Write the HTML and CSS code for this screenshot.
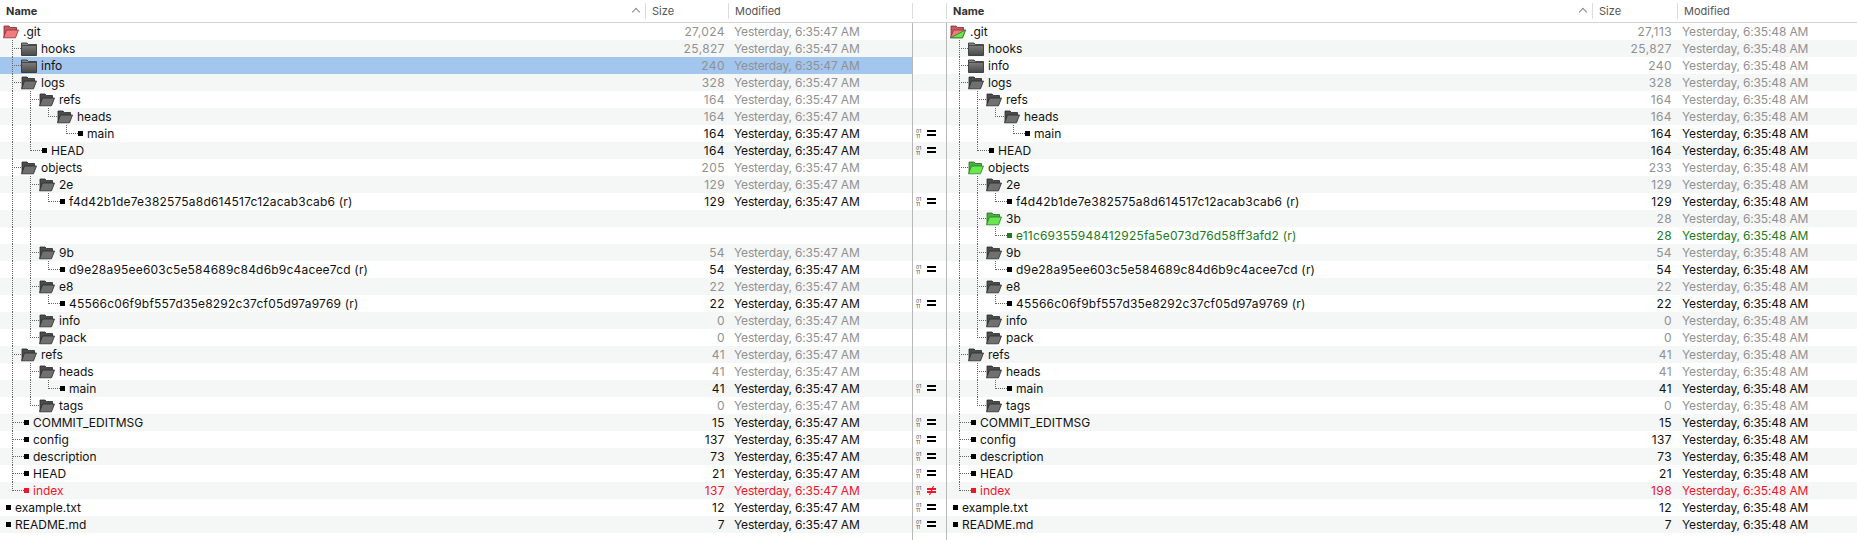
FILE: index.html
```html
<!DOCTYPE html>
<html lang="en">
<head>
    <meta charset="UTF-8">
    <meta name="viewport" content="width=device-width, initial-scale=1.0">
    <title>Folder Compare</title>
    <link rel="stylesheet" href="styles.css">
</head>
<body>
    <svg class="defs" width="0" height="0">
        <defs>
            <linearGradient id="grey" x1="0" y1="0" x2="0" y2="1">
                <stop offset="0" stop-color="#8a8a8a"/>
                <stop offset="1" stop-color="#484848"/>
            </linearGradient>
            <symbol id="closed" viewBox="0 0 16 14">
                <path d="M.5 13.500V1h5.500l1.500 1.500h8v11z" fill="url(#grey)" stroke="#2a2a2a" stroke-width=".8"/>
                <path d="M.8 3.500h14.400" stroke="#3a3a3a" stroke-width=".8"/>
            </symbol>
            <symbol id="open" viewBox="0 0 16 14">
                <path d="M1 12.500V1h5l1.500 1.500h6v3" fill="#4c4c4c" stroke="#2a2a2a" stroke-width=".8"/>
                <path d="M3.500 5h12l-3 7.800H.5z" fill="#707070" stroke="#2a2a2a" stroke-width=".8"/>
            </symbol>
            <symbol id="open-red" viewBox="0 0 16 14">
                <path d="M1 12.500V1h5l1.500 1.500h6v3" fill="#c85a60" stroke="#7c2a2e" stroke-width=".8"/>
                <path d="M3.500 5h12l-3 7.800H.5z" fill="#f07c82" stroke="#8c3236" stroke-width=".8"/>
            </symbol>
            <symbol id="open-green" viewBox="0 0 16 14">
                <path d="M1 12.500V1h5l1.500 1.500h6v3" fill="#48b03c" stroke="#2a6a24" stroke-width=".8"/>
                <path d="M3.500 5h12l-3 7.800H.5z" fill="#66e84e" stroke="#2f7a28" stroke-width=".8"/>
            </symbol>
            <symbol id="open-both" viewBox="0 0 16 14">
                <path d="M1 12.500V1h5l1.500 1.500h6v3" fill="#c85a60" stroke="#7c2a2e" stroke-width=".8"/>
                <path d="M3.500 5h12l-3 7.800H.5z" fill="#f07c82" stroke="#8c3236" stroke-width=".8"/>
                <path d="M15.500 5l-3 7.800H.5z" fill="#66e84e" stroke="#2f7a28" stroke-width=".8"/>
            </symbol>
            <symbol id="same" viewBox="0 0 9 7">
                <path d="M0 0h9v2h-9zM0 4h9v2h-9z" fill="#000"/>
            </symbol>
            <symbol id="differ" viewBox="0 0 9 9">
                <path d="M0 2h9v2h-9zM0 5h9v2h-9z" fill="#f01428"/>
                <path d="M6.500 0l-4 9" stroke="#f01428" stroke-width="1.200"/>
            </symbol>
        </defs>
    </svg>

    <main class="compare">
        <section class="pane pane-left">
            <header class="head">
                <div class="col col-name"><span>Name</span><i class="caret"></i></div>
                <div class="col col-size">Size</div>
                <div class="col col-date">Modified</div>
            </header>
            <div class="row"><svg class="folder"><use href="#open-red"/></svg><span class="name">.git</span><span class="size dim">27,024</span><span class="date dim">Yesterday, 6:35:47 AM</span></div>
            <div class="row alt"><i class="g tee"></i><svg class="folder"><use href="#closed"/></svg><span class="name">hooks</span><span class="size dim">25,827</span><span class="date dim">Yesterday, 6:35:47 AM</span></div>
            <div class="row selected"><i class="g tee"></i><svg class="folder"><use href="#closed"/></svg><span class="name">info</span><span class="size dim">240</span><span class="date dim">Yesterday, 6:35:47 AM</span></div>
            <div class="row alt"><i class="g tee"></i><svg class="folder"><use href="#open"/></svg><span class="name">logs</span><span class="size dim">328</span><span class="date dim">Yesterday, 6:35:47 AM</span></div>
            <div class="row"><i class="g line"></i><i class="g tee"></i><svg class="folder"><use href="#open"/></svg><span class="name">refs</span><span class="size dim">164</span><span class="date dim">Yesterday, 6:35:47 AM</span></div>
            <div class="row alt"><i class="g line"></i><i class="g line"></i><i class="g end"></i><svg class="folder"><use href="#open"/></svg><span class="name">heads</span><span class="size dim">164</span><span class="date dim">Yesterday, 6:35:47 AM</span></div>
            <div class="row"><i class="g line"></i><i class="g line"></i><i class="g"></i><i class="g end to-file"></i><i class="file"></i><span class="name">main</span><span class="size">164</span><span class="date">Yesterday, 6:35:47 AM</span></div>
            <div class="row alt"><i class="g line"></i><i class="g end to-file"></i><i class="file"></i><span class="name">HEAD</span><span class="size">164</span><span class="date">Yesterday, 6:35:47 AM</span></div>
            <div class="row"><i class="g tee"></i><svg class="folder"><use href="#open"/></svg><span class="name">objects</span><span class="size dim">205</span><span class="date dim">Yesterday, 6:35:47 AM</span></div>
            <div class="row alt"><i class="g line"></i><i class="g tee"></i><svg class="folder"><use href="#open"/></svg><span class="name">2e</span><span class="size dim">129</span><span class="date dim">Yesterday, 6:35:47 AM</span></div>
            <div class="row"><i class="g line"></i><i class="g line"></i><i class="g end to-file"></i><i class="file"></i><span class="name hash">f4d42b1de7e382575a8d614517c12acab3cab6 (r)</span><span class="size">129</span><span class="date">Yesterday, 6:35:47 AM</span></div>
            <div class="row alt"><i class="g line"></i><i class="g line"></i></div>
            <div class="row"><i class="g line"></i><i class="g line"></i></div>
            <div class="row alt"><i class="g line"></i><i class="g tee"></i><svg class="folder"><use href="#open"/></svg><span class="name">9b</span><span class="size dim">54</span><span class="date dim">Yesterday, 6:35:47 AM</span></div>
            <div class="row"><i class="g line"></i><i class="g line"></i><i class="g end to-file"></i><i class="file"></i><span class="name hash">d9e28a95ee603c5e584689c84d6b9c4acee7cd (r)</span><span class="size">54</span><span class="date">Yesterday, 6:35:47 AM</span></div>
            <div class="row alt"><i class="g line"></i><i class="g tee"></i><svg class="folder"><use href="#open"/></svg><span class="name">e8</span><span class="size dim">22</span><span class="date dim">Yesterday, 6:35:47 AM</span></div>
            <div class="row"><i class="g line"></i><i class="g line"></i><i class="g end to-file"></i><i class="file"></i><span class="name hash">45566c06f9bf557d35e8292c37cf05d97a9769 (r)</span><span class="size">22</span><span class="date">Yesterday, 6:35:47 AM</span></div>
            <div class="row alt"><i class="g line"></i><i class="g tee"></i><svg class="folder"><use href="#open"/></svg><span class="name">info</span><span class="size dim">0</span><span class="date dim">Yesterday, 6:35:47 AM</span></div>
            <div class="row"><i class="g line"></i><i class="g end"></i><svg class="folder"><use href="#open"/></svg><span class="name">pack</span><span class="size dim">0</span><span class="date dim">Yesterday, 6:35:47 AM</span></div>
            <div class="row alt"><i class="g tee"></i><svg class="folder"><use href="#open"/></svg><span class="name">refs</span><span class="size dim">41</span><span class="date dim">Yesterday, 6:35:47 AM</span></div>
            <div class="row"><i class="g line"></i><i class="g tee"></i><svg class="folder"><use href="#open"/></svg><span class="name">heads</span><span class="size dim">41</span><span class="date dim">Yesterday, 6:35:47 AM</span></div>
            <div class="row alt"><i class="g line"></i><i class="g line"></i><i class="g end to-file"></i><i class="file"></i><span class="name">main</span><span class="size">41</span><span class="date">Yesterday, 6:35:47 AM</span></div>
            <div class="row"><i class="g line"></i><i class="g end"></i><svg class="folder"><use href="#open"/></svg><span class="name">tags</span><span class="size dim">0</span><span class="date dim">Yesterday, 6:35:47 AM</span></div>
            <div class="row alt"><i class="g tee to-file"></i><i class="file"></i><span class="name">COMMIT_EDITMSG</span><span class="size">15</span><span class="date">Yesterday, 6:35:47 AM</span></div>
            <div class="row"><i class="g tee to-file"></i><i class="file"></i><span class="name">config</span><span class="size">137</span><span class="date">Yesterday, 6:35:47 AM</span></div>
            <div class="row alt"><i class="g tee to-file"></i><i class="file"></i><span class="name">description</span><span class="size">73</span><span class="date">Yesterday, 6:35:47 AM</span></div>
            <div class="row"><i class="g tee to-file"></i><i class="file"></i><span class="name">HEAD</span><span class="size">21</span><span class="date">Yesterday, 6:35:47 AM</span></div>
            <div class="row alt red"><i class="g end to-file"></i><i class="file"></i><span class="name">index</span><span class="size">137</span><span class="date">Yesterday, 6:35:47 AM</span></div>
            <div class="row"><i class="file"></i><span class="name">example.txt</span><span class="size">12</span><span class="date">Yesterday, 6:35:47 AM</span></div>
            <div class="row alt"><i class="file"></i><span class="name">README.md</span><span class="size">7</span><span class="date">Yesterday, 6:35:47 AM</span></div>
        </section>

        <section class="status">
            <header class="head"><div class="status-head"></div></header>
            <div class="status-body">
                <div class="row"></div>
                <div class="row alt"></div>
                <div class="row"></div>
                <div class="row alt"></div>
                <div class="row"></div>
                <div class="row alt"></div>
                <div class="row"><span class="bin">01<br>11</span><svg class="same"><use href="#same"/></svg></div>
                <div class="row alt"><span class="bin">01<br>11</span><svg class="same"><use href="#same"/></svg></div>
                <div class="row"></div>
                <div class="row alt"></div>
                <div class="row"><span class="bin">01<br>11</span><svg class="same"><use href="#same"/></svg></div>
                <div class="row alt"></div>
                <div class="row"></div>
                <div class="row alt"></div>
                <div class="row"><span class="bin">01<br>11</span><svg class="same"><use href="#same"/></svg></div>
                <div class="row alt"></div>
                <div class="row"><span class="bin">01<br>11</span><svg class="same"><use href="#same"/></svg></div>
                <div class="row alt"></div>
                <div class="row"></div>
                <div class="row alt"></div>
                <div class="row"></div>
                <div class="row alt"><span class="bin">01<br>11</span><svg class="same"><use href="#same"/></svg></div>
                <div class="row"></div>
                <div class="row alt"><span class="bin">01<br>11</span><svg class="same"><use href="#same"/></svg></div>
                <div class="row"><span class="bin">01<br>11</span><svg class="same"><use href="#same"/></svg></div>
                <div class="row alt"><span class="bin">01<br>11</span><svg class="same"><use href="#same"/></svg></div>
                <div class="row"><span class="bin">01<br>11</span><svg class="same"><use href="#same"/></svg></div>
                <div class="row alt"><span class="bin">01<br>11</span><svg class="differ"><use href="#differ"/></svg></div>
                <div class="row"><span class="bin">01<br>11</span><svg class="same"><use href="#same"/></svg></div>
                <div class="row alt"><span class="bin">01<br>11</span><svg class="same"><use href="#same"/></svg></div>
            </div>
        </section>

        <section class="pane pane-right">
            <header class="head">
                <div class="col col-name"><span>Name</span><i class="caret"></i></div>
                <div class="col col-size">Size</div>
                <div class="col col-date">Modified</div>
            </header>
            <div class="row"><svg class="folder"><use href="#open-both"/></svg><span class="name">.git</span><span class="size dim">27,113</span><span class="date dim">Yesterday, 6:35:48 AM</span></div>
            <div class="row alt"><i class="g tee"></i><svg class="folder"><use href="#closed"/></svg><span class="name">hooks</span><span class="size dim">25,827</span><span class="date dim">Yesterday, 6:35:48 AM</span></div>
            <div class="row"><i class="g tee"></i><svg class="folder"><use href="#closed"/></svg><span class="name">info</span><span class="size dim">240</span><span class="date dim">Yesterday, 6:35:48 AM</span></div>
            <div class="row alt"><i class="g tee"></i><svg class="folder"><use href="#open"/></svg><span class="name">logs</span><span class="size dim">328</span><span class="date dim">Yesterday, 6:35:48 AM</span></div>
            <div class="row"><i class="g line"></i><i class="g tee"></i><svg class="folder"><use href="#open"/></svg><span class="name">refs</span><span class="size dim">164</span><span class="date dim">Yesterday, 6:35:48 AM</span></div>
            <div class="row alt"><i class="g line"></i><i class="g line"></i><i class="g end"></i><svg class="folder"><use href="#open"/></svg><span class="name">heads</span><span class="size dim">164</span><span class="date dim">Yesterday, 6:35:48 AM</span></div>
            <div class="row"><i class="g line"></i><i class="g line"></i><i class="g"></i><i class="g end to-file"></i><i class="file"></i><span class="name">main</span><span class="size">164</span><span class="date">Yesterday, 6:35:48 AM</span></div>
            <div class="row alt"><i class="g line"></i><i class="g end to-file"></i><i class="file"></i><span class="name">HEAD</span><span class="size">164</span><span class="date">Yesterday, 6:35:48 AM</span></div>
            <div class="row"><i class="g tee"></i><svg class="folder"><use href="#open-green"/></svg><span class="name">objects</span><span class="size dim">233</span><span class="date dim">Yesterday, 6:35:48 AM</span></div>
            <div class="row alt"><i class="g line"></i><i class="g tee"></i><svg class="folder"><use href="#open"/></svg><span class="name">2e</span><span class="size dim">129</span><span class="date dim">Yesterday, 6:35:48 AM</span></div>
            <div class="row"><i class="g line"></i><i class="g line"></i><i class="g end to-file"></i><i class="file"></i><span class="name hash">f4d42b1de7e382575a8d614517c12acab3cab6 (r)</span><span class="size">129</span><span class="date">Yesterday, 6:35:48 AM</span></div>
            <div class="row alt"><i class="g line"></i><i class="g tee"></i><svg class="folder"><use href="#open-green"/></svg><span class="name">3b</span><span class="size dim">28</span><span class="date dim">Yesterday, 6:35:48 AM</span></div>
            <div class="row green"><i class="g line"></i><i class="g line"></i><i class="g end to-file"></i><i class="file"></i><span class="name hash">e11c69355948412925fa5e073d76d58ff3afd2 (r)</span><span class="size">28</span><span class="date">Yesterday, 6:35:48 AM</span></div>
            <div class="row alt"><i class="g line"></i><i class="g tee"></i><svg class="folder"><use href="#open"/></svg><span class="name">9b</span><span class="size dim">54</span><span class="date dim">Yesterday, 6:35:48 AM</span></div>
            <div class="row"><i class="g line"></i><i class="g line"></i><i class="g end to-file"></i><i class="file"></i><span class="name hash">d9e28a95ee603c5e584689c84d6b9c4acee7cd (r)</span><span class="size">54</span><span class="date">Yesterday, 6:35:48 AM</span></div>
            <div class="row alt"><i class="g line"></i><i class="g tee"></i><svg class="folder"><use href="#open"/></svg><span class="name">e8</span><span class="size dim">22</span><span class="date dim">Yesterday, 6:35:48 AM</span></div>
            <div class="row"><i class="g line"></i><i class="g line"></i><i class="g end to-file"></i><i class="file"></i><span class="name hash">45566c06f9bf557d35e8292c37cf05d97a9769 (r)</span><span class="size">22</span><span class="date">Yesterday, 6:35:48 AM</span></div>
            <div class="row alt"><i class="g line"></i><i class="g tee"></i><svg class="folder"><use href="#open"/></svg><span class="name">info</span><span class="size dim">0</span><span class="date dim">Yesterday, 6:35:48 AM</span></div>
            <div class="row"><i class="g line"></i><i class="g end"></i><svg class="folder"><use href="#open"/></svg><span class="name">pack</span><span class="size dim">0</span><span class="date dim">Yesterday, 6:35:48 AM</span></div>
            <div class="row alt"><i class="g tee"></i><svg class="folder"><use href="#open"/></svg><span class="name">refs</span><span class="size dim">41</span><span class="date dim">Yesterday, 6:35:48 AM</span></div>
            <div class="row"><i class="g line"></i><i class="g tee"></i><svg class="folder"><use href="#open"/></svg><span class="name">heads</span><span class="size dim">41</span><span class="date dim">Yesterday, 6:35:48 AM</span></div>
            <div class="row alt"><i class="g line"></i><i class="g line"></i><i class="g end to-file"></i><i class="file"></i><span class="name">main</span><span class="size">41</span><span class="date">Yesterday, 6:35:48 AM</span></div>
            <div class="row"><i class="g line"></i><i class="g end"></i><svg class="folder"><use href="#open"/></svg><span class="name">tags</span><span class="size dim">0</span><span class="date dim">Yesterday, 6:35:48 AM</span></div>
            <div class="row alt"><i class="g tee to-file"></i><i class="file"></i><span class="name">COMMIT_EDITMSG</span><span class="size">15</span><span class="date">Yesterday, 6:35:48 AM</span></div>
            <div class="row"><i class="g tee to-file"></i><i class="file"></i><span class="name">config</span><span class="size">137</span><span class="date">Yesterday, 6:35:48 AM</span></div>
            <div class="row alt"><i class="g tee to-file"></i><i class="file"></i><span class="name">description</span><span class="size">73</span><span class="date">Yesterday, 6:35:48 AM</span></div>
            <div class="row"><i class="g tee to-file"></i><i class="file"></i><span class="name">HEAD</span><span class="size">21</span><span class="date">Yesterday, 6:35:48 AM</span></div>
            <div class="row alt red"><i class="g end to-file"></i><i class="file"></i><span class="name">index</span><span class="size">198</span><span class="date">Yesterday, 6:35:48 AM</span></div>
            <div class="row"><i class="file"></i><span class="name">example.txt</span><span class="size">12</span><span class="date">Yesterday, 6:35:48 AM</span></div>
            <div class="row alt"><i class="file"></i><span class="name">README.md</span><span class="size">7</span><span class="date">Yesterday, 6:35:48 AM</span></div>
        </section>
    </main>
</body>
</html>
```

FILE: styles.css
```css
html, body {
    margin: 0;
    padding: 0;
    background-color: white;
    overflow: hidden;
}
body {
    color: #111;
    font-family: Inter, "Liberation Sans", sans-serif;
    font-size: 12px;
}
.defs {
    display: block;
    height: 0;
}
.compare {
    display: flex;
    height: 540px;
}
.pane-left {
    width: 912px;
}
.status {
    width: 35px;
    display: flex;
    flex-direction: column;
}
.pane-right {
    width: 910px;
}

/* column headers */
.head {
    display: flex;
    align-items: center;
    height: 22px;
    border-bottom: 1px solid #d4d4d4;
    color: #555;
    font-size: 11px;
}
.col {
    height: 16px;
    line-height: 16px;
    padding-left: 6px;
    border-left: 1px solid #dcdcdc;
    box-sizing: border-box;
}
.col-name {
    flex: 1;
    display: flex;
    justify-content: space-between;
    border-left: none;
    font-weight: 700;
    color: #333;
}
.pane-left .col-size {
    width: 83px;
}
.pane-left .col-date {
    width: 184px;
}
.pane-right .col-size {
    width: 85px;
}
.pane-right .col-date {
    width: 180px;
}
.caret {
    width: 5px;
    height: 5px;
    margin: 6px 6px 0 0;
    border-left: 1px solid #888;
    border-top: 1px solid #888;
    transform: rotate(45deg);
}
.status-head {
    width: 100%;
    height: 16px;
    border-left: 1px solid #dcdcdc;
    border-right: 1px solid #dcdcdc;
    box-sizing: border-box;
}
.status-body {
    flex: 1;
    border-left: 1px solid #b8b8b8;
    border-right: 1px solid #b8b8b8;
}

/* rows */
.row {
    display: flex;
    align-items: center;
    height: 17px;
    padding-left: 3px;
    white-space: nowrap;
}
.alt {
    background-color: #f5f7f7;
}
.selected {
    background-color: #a2c6ee;
}
.name {
    flex: 1;
}
.hash {
    letter-spacing: .19px;
}
.size {
    text-align: right;
    letter-spacing: .4px;
}
.date {
    letter-spacing: -.15px;
}
.pane-left .size {
    width: 60px;
    margin-right: 9px;
}
.pane-right .size {
    width: 60px;
    margin-right: 10px;
}
.pane-left .date {
    width: 178px;
}
.pane-right .date {
    width: 175px;
}
.dim {
    color: #919191;
}
.red, .red .dim {
    color: #f01428;
}
.green {
    color: #217a21;
}

/* tree */
.g {
    position: relative;
    width: 18px;
    height: 17px;
    flex: none;
}
.g.to-file {
    width: 21px;
}
.line::before, .tee::before, .end::before {
    content: "";
    position: absolute;
    left: 9px;
    top: 0;
    bottom: 0;
    border-left: 1px dotted #666;
}
.end::before {
    bottom: 8px;
}
.tee::after, .end::after {
    content: "";
    position: absolute;
    left: 9px;
    right: 0;
    top: 8px;
    border-top: 1px dotted #666;
}
.folder {
    width: 16px;
    height: 14px;
    margin-right: 4px;
    flex: none;
}
.file {
    width: 5px;
    height: 5px;
    margin: 0 4px 0 3px;
    background-color: #000;
    flex: none;
}
.to-file + .file {
    margin-left: 0;
}
.red .file {
    background-color: #f01428;
}
.green .file {
    background-color: #217a21;
}

/* middle column */
.bin {
    width: 6px;
    margin: 0 5px 0 0;
    font-size: 5px;
    line-height: 5px;
    color: #444;
}
.same {
    width: 9px;
    height: 7px;
}
.differ {
    width: 9px;
    height: 9px;
}
```
